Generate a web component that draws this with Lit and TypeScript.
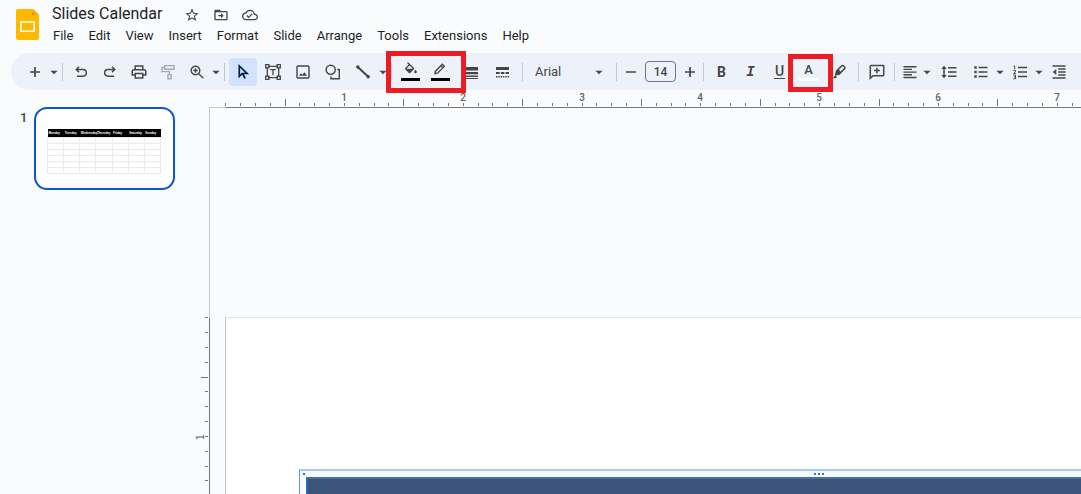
import { LitElement, html, svg, css } from "lit";
import { customElement, property, state } from "lit/decorators.js";

const INCH = 118.8;

const line = (d: string, w = 1.5) =>
  svg`<path d=${d} fill="none" stroke="currentColor" stroke-width=${w}></path>`;
const solid = (d: string) => svg`<path d=${d} fill="currentColor"></path>`;

/* 18-unit glyphs; those on a 24-unit grid sit in a scaled group */
const ICONS: Record<string, unknown> = {
  plus: line("M9 4v10M4 9h10", 1.7),
  minus: line("M4 9h10", 1.5),
  caret: solid("M5 7.5h8L9 11.5z"),
  undo: line("M7 3.8L4.3 6.5L7 9.2M4.5 6.5H11a3.2 3.2 0 0 1 0 6.7H5", 1.5),
  redo: line("M11 3.8L13.7 6.5L11 9.2M13.5 6.5H7a3.2 3.2 0 0 0 0 6.7H13", 1.5),
  print: svg`<g transform="scale(.75)">${solid("M19 8h-1V3H6v5H5c-1.66 0-3 1.34-3 3v6h4v4h12v-4h4v-6c0-1.66-1.34-3-3-3zM8 5h8v3H8V5zm8 12v2H8v-4h8v2zm2-2v-2H6v2H4v-4c0-.55.45-1 1-1h14c.55 0 1 .45 1 1v4h-2z")}</g>`,
  paint: svg`<g opacity=".42">${line("M5.7 2.6h9.3v3.6H5.7zM5.7 4.4H3v4.2h7.5v3M8.9 11.6h3.2v4.2H8.9z", 1.4)}</g>`,
  zoom: line("M7.5 3.2a4.3 4.3 0 1 1 0 8.6a4.3 4.3 0 0 1 0-8.6zM10.7 10.7L15.3 15.3M7.5 5.3v4.4M5.3 7.5h4.4", 1.4),
  pointer: line("M5.3 3v10.4l2.9-2.9h4.8zM8.6 10.5l2.5 5", 1.7),
  textbox: line("M4 3.3h10M4 14.7h10M3.3 4v10M14.7 4v10M1.7 1.7h3.2v3.2H1.7zM13.1 1.7h3.2v3.2h-3.2zM1.7 13.1h3.2v3.2H1.7zM13.1 13.1h3.2v3.2h-3.2zM6.2 6.7h5.6M9 6.7v5.5", 1.3),
  image: svg`${line("M4 3h10a1 1 0 0 1 1 1v10a1 1 0 0 1-1 1H4a1 1 0 0 1-1-1V4a1 1 0 0 1 1-1z", 1.4)}${solid("M5 12.8l2-2.6 1.4 1.6 2-2.6 2.7 3.6z")}`,
  shape: line("M6.7 2.2a4.6 4.6 0 1 1 0 9.2a4.6 4.6 0 0 1 0-9.2zM13.3 6.5h2v9.3H7v-2.2", 1.4),
  line: svg`${line("M4 4.2L14 13.6", 2)}<circle cx="3.8" cy="4" r="1.7" fill="currentColor"></circle><circle cx="14.2" cy="13.8" r="1.7" fill="currentColor"></circle>`,
  fill: svg`<g transform="translate(1 0) scale(.75)">${solid("M16.56 8.94L7.62 0 6.21 1.41l2.38 2.38-5.15 5.15c-.59.59-.59 1.54 0 2.12l5.5 5.5c.29.29.68.44 1.06.44s.77-.15 1.06-.44l5.5-5.5c.59-.58.59-1.53 0-2.12zM5.21 10L10 5.21 14.79 10H5.21zM19 11.5s-2 2.17-2 3.5c0 1.1.9 2 2 2s2-.9 2-2c0-1.33-2-3.5-2-3.5z")}</g>`,
  pencil: line("M3.4 13.1l.5-2.8L11.6 2.6l2.3 2.3L6.2 12.6zM10 4.2l2.3 2.3", 1.5),
  weight: solid("M2 4h14v3.4H2zM2 9h14v2.2H2zM2 12.6h14v1.4H2zM2 15h14v1H2z"),
  dash: solid("M2 4h13v3H2zM2 9h3.6v2H2zM6.8 9h3.6v2H6.8zM11.6 9H15v2h-3.4zM2 13h1.5v1.5H2zM4.3 13h1.5v1.5H4.3zM6.6 13h1.5v1.5H6.6zM8.9 13h1.5v1.5H8.9zM11.2 13h1.5v1.5h-1.5zM13.5 13H15v1.5h-1.5z"),
  marker: svg`${line("M6.5 8.1L11.5 3a1.5 1.5 0 0 1 2.2 0l.7.7a1.5 1.5 0 0 1 0 2.2L9.3 11z", 1.5)}${solid("M8.5 6.2l3 3L8.8 12 5.4 12.5 5 12.1 5.6 8.7zM2.8 15.2l2.4-3 1.8 1.8-1.3 1.2z")}`,
  comment: line("M3 2.5h12a.7.7 0 0 1 .7.7v8.9a.7.7 0 0 1-.7.7H5l-2.7 2.5V3.2a.7.7 0 0 1 .7-.7zM9 4.7v5.8M6.1 7.6h5.8", 1.5),
  align: line("M2.5 3.7h13M2.5 6.4h8.5M2.5 9.1h13M2.5 11.8h8.5M2.5 14.5h13", 1.4),
  spacing: svg`${line("M4 5v8M8 4.7h8.5M8 9h8.5M8 13.3h8.5", 1.5)}${solid("M4 2.8l2.7 3.2H1.3zM4 15.2l2.7-3.2H1.3z")}`,
  bullets: svg`${line("M6.5 4.5h9M6.5 9h9M6.5 13.5h9", 1.5)}${solid("M2.3 3.3h2.4v2.4H2.3zM2.3 7.8h2.4v2.4H2.3zM2.3 12.3h2.4v2.4H2.3z")}`,
  numbers: svg`${line("M7 4.5h9M7 9h9M7 13.5h9", 1.5)}${line("M2.5 3h1.2v3.3M2.3 7.6h2.2v1.2L2.5 10.5h2.3M2.3 12.1h2.2v3.6H2.3M3 13.9h1.5", 1)}`,
  outdent: svg`${line("M2.5 3h13M8.2 6h7.3M8.2 9h7.3M8.2 12h7.3M2.5 15h13", 1.4)}${solid("M6.3 6v6L2.7 9z")}`,
  star: svg`<g transform="scale(.75)">${solid("M22 9.24l-7.19-.62L12 2 9.19 8.63 2 9.24l5.46 4.73L5.82 21 12 17.27 18.18 21l-1.63-7.03L22 9.24zM12 15.4l-3.76 2.27 1-4.28-3.32-2.88 4.38-.38L12 6.1l1.71 4.04 4.38.38-3.32 2.88 1 4.28L12 15.4z")}</g>`,
  move: svg`<g transform="scale(.75)">${solid("M20 6h-8l-2-2H4c-1.1 0-2 .9-2 2v12c0 1.1.9 2 2 2h16c1.1 0 2-.9 2-2V8c0-1.1-.9-2-2-2zm0 12H4V8h16v10zm-8-1l4-4-4-4v3H8v2h4z")}</g>`,
  cloud: svg`<g transform="scale(.75)">${solid("M19.35 10.04C18.67 6.59 15.64 4 12 4 9.11 4 6.61 5.64 5.36 8.04 2.35 8.36 0 10.91 0 14c0 3.31 2.69 6 6 6h13c2.76 0 5-2.24 5-5 0-2.64-2.05-4.78-4.65-4.96zM19 18H6c-2.21 0-4-1.79-4-4 0-2.05 1.53-3.76 3.56-3.97l1.07-.11.5-.95C8.08 7.14 9.94 6 12 6c2.62 0 4.88 1.86 5.39 4.43l.3 1.5 1.53.11c1.56.1 2.78 1.41 2.78 2.96 0 1.65-1.35 3-3 3zm-9-3.82l-2.09-2.09L6.5 13.5 10 17l6.01-6.01-1.41-1.41z")}</g>`,
};

const icon = (name: string) =>
  html`<svg class="icon" viewBox="0 0 18 18" aria-hidden="true">${ICONS[name]}</svg>`;

@customElement("page-ruler")
class PageRuler extends LitElement {
  @property({ type: Boolean }) vertical = false;
  @state() private extent = 0;

  private observer = new ResizeObserver(([entry]) => {
    const { width, height } = entry.contentRect;
    this.extent = this.vertical ? height : width;
  });

  static styles = css`
    :host { display: block; overflow: hidden; }
    svg { display: block; width: 100%; height: 100%; }
    text { font: 500 10px Roboto, sans-serif; fill: #5f6368; text-anchor: middle; }
    .turned { font-family: "DejaVu Sans", sans-serif; }
  `;

  connectedCallback() {
    super.connectedCallback();
    this.observer.observe(this);
  }

  disconnectedCallback() {
    this.observer.disconnect();
    super.disconnectedCallback();
  }

  render() {
    const start = this.vertical ? 209.6 : 16.6;
    const ticks = [];
    for (let i = 0; start + (i * INCH) / 8 < this.extent - 4; i++) {
      const p = Math.floor(start + (i * INCH) / 8);
      const long = i % 8 === 4;
      const num = i % 8 === 0 ? i / 8 : 0;
      if (this.vertical) {
        ticks.push(svg`<rect x=${long ? 11 : 15} y=${p} width=${long ? 7 : 3} height="1" fill="#747775"></rect>`);
        if (num) ticks.push(svg`<text class="turned" transform=${`translate(14 ${p + 1}) rotate(-90)`}>${num}</text>`);
      } else {
        ticks.push(svg`<rect x=${p} y=${long ? 9 : 13} width="1" height=${long ? 7 : 3} fill="#747775"></rect>`);
        if (num) ticks.push(svg`<text x=${p} y="11">${num}</text>`);
      }
    }
    return this.vertical
      ? html`<svg aria-hidden="true"><rect x="19" width="1" height="210" fill="#c4c7c5"></rect><rect x="19" y="210" width="1" height="100%" fill="#747775"></rect>${ticks}</svg>`
      : html`<svg aria-hidden="true"><rect y="17" width="17" height="1" fill="#c4c7c5"></rect><rect x="17" y="17" width="100%" height="1" fill="#747775"></rect>${ticks}</svg>`;
  }
}

type Tool = [name: string, label: string, size?: string];

@customElement("app-root")
class AppRoot extends LitElement {
  static styles = css`
    :host {
      display: flex;
      flex-direction: column;
      height: 100vh;
      overflow: hidden;
      background: #f9fbfd;
      color: #1f1f1f;
      font-family: Roboto, sans-serif;
      font-size: 13px;
    }
    * { box-sizing: border-box; }
    button, input, select {
      font: inherit;
      color: inherit;
      background: none;
      border: 0;
      padding: 0;
      margin: 0;
    }
    .icon { width: 18px; height: 18px; display: block; flex: none; }
    header { display: flex; flex: none; gap: 12px; padding: 4px 16px 8px; }
    .logo { width: 24px; height: 32px; margin-top: 5px; flex: none; }
    .titles { display: flex; align-items: center; height: 20px; }
    h1 { margin: 0; font-size: 16px; line-height: 20px; font-weight: 400; }
    .title-actions { display: flex; gap: 13px; padding: 2px 0 0 21px; color: #444746; }
    .title-actions .icon { width: 16px; height: 16px; }
    nav { display: flex; gap: 15px; padding: 3px 0 0 1px; }
    nav button { line-height: 18px; }

    .toolbar {
      display: flex;
      flex: none;
      align-items: center;
      height: 37px;
      margin-left: 11px;
      padding-left: 9px;
      border-radius: 20px 0 0 20px;
      background: #edf2fa;
      color: #444746;
      white-space: nowrap;
    }
    .group { display: flex; align-items: center; flex: none; position: relative; }
    .tool { display: grid; place-items: center; height: 28px; width: 29px; flex: none; }
    .s { width: 24px; }
    .m { width: 30px; }
    .l { width: 32px; }
    .xl { width: 34px; }
    .caret { width: 10px; overflow: hidden; justify-content: center; }
    .caret .icon { width: 16px; height: 16px; }
    .active { width: 28px; margin: 0 1px; border-radius: 4px; background: #d3e3fd; color: #041e49; }
    .sep { width: 1px; height: 18px; margin: 0 3px; background: #c7c7c7; flex: none; }
    .swatch { align-content: center; }
    .swatch .icon { height: 16px; width: 16px; }
    .swatch::after { content: ""; width: 19px; height: 3px; background: #000; }
    .color { align-content: center; line-height: 16px; font-size: 13px; font-weight: 500; }
    .color::after { content: ""; width: 19px; height: 3px; background: #fff; }
    .bold { font-size: 14px; font-weight: 700; }
    .italic { font: italic 700 14px "Liberation Mono", monospace; }
    .underline { font-size: 14px; font-weight: 500; align-content: center; line-height: 13px; }
    .underline::after { content: ""; width: 11px; height: 1px; background: currentColor; }
    .font { display: flex; flex: none; align-items: center; width: 87px; padding: 0 6px 0 9px; }
    .font select { appearance: none; flex: 1; min-width: 0; font-size: 13px; line-height: 18px; outline: 0; }
    .font .icon { width: 16px; height: 16px; }
    .stepper { display: flex; flex: none; align-items: center; gap: 4px; padding-left: 1px; }
    .stepper button { display: grid; place-items: center; width: 20px; height: 28px; }
    .stepper input {
      width: 31px;
      height: 21px;
      border: 1px solid #747775;
      border-radius: 4px;
      text-align: center;
      font-size: 12px;
      font-weight: 500;
    }
    .mark { position: absolute; border: 5px solid #ed1c24; pointer-events: none; z-index: 1; }
    .mark-fill { left: -9px; top: -7px; width: 80px; height: 42px; }
    .mark-text { left: 81px; top: -4px; width: 45px; height: 38px; }

    main { flex: 1; display: grid; grid-template-columns: 190px 20px minmax(0, 1fr); grid-template-rows: 18px minmax(0, 1fr); min-height: 0; }
    .ruler-x { grid-column: 2 / 4; grid-row: 1; margin-left: 19px; }
    .ruler-y { grid-column: 2; grid-row: 2; min-height: 0; }
    .film { grid-column: 1; grid-row: 1 / 3; display: flex; align-items: flex-start; gap: 8px; padding: 17px 15px 0 20px; }
    .num { width: 6px; padding-top: 2px; line-height: 18px; color: #444746; font-weight: 500; }
    .thumb { flex: none; width: 141px; height: 83px; padding: 20px 12px 0 11px; border: 2px solid #0b57d0; border-radius: 13px; background: #fff; }
    .thumb table { width: 100%; border-collapse: collapse; table-layout: fixed; font: 700 3px "Liberation Sans", sans-serif; }
    .thumb th { height: 8px; padding: 2px 0 0 1px; background: #000; color: #fff; text-align: left; vertical-align: top; }
    .thumb td { height: 6px; padding: 0; border: 1px solid #eaeaea; }

    .canvas { grid-column: 3; grid-row: 2; display: flex; overflow: hidden; padding: 209px 0 0 15px; min-height: 0; }
    .slide { flex: none; width: 1188px; padding: 151px 0 0 73px; background: #fff; border-left: 1px solid #c4c7c5; border-top: 1px solid #e3e5e6; overflow: hidden; }
    .frame { width: 1040px; min-height: 300px; border: 1px solid #5c94dc; border-top: 2px solid #a5c9f3; background: #f7f9fc; }
    .handles { display: grid; grid-template-columns: 1fr auto 1fr; align-items: center; height: 6px; padding: 0 3px; }
    .dots { display: flex; gap: 2px; }
    .dots i { width: 2px; height: 2px; background: #3272d2; }
    .sheet { width: 1024px; margin-left: 6px; border-collapse: collapse; table-layout: fixed; border-left: 2px solid #2e66b0; }
    .sheet td { height: 60px; padding: 0; background: #3c547a; border-top: 2px solid #4470a8; }
  `;

  private tool([name, label, size = ""]: Tool) {
    return html`<button class="tool ${size}" aria-label=${label}>${icon(name)}</button>`;
  }
  private tools(...list: Tool[]) {
    return list.map((t) => this.tool(t));
  }
  private caret(label: string) {
    return this.tool(["caret", label, "caret"]);
  }

  render() {
    const sep = html`<span class="sep"></span>`;
    const days = ["Monday", "Tuesday", "Wednesday", "Thursday", "Friday", "Saturday", "Sunday"];
    return html`
      <header>
        <svg class="logo" viewBox="0 0 24 32" aria-hidden="true">
          <path d="M2 0h15l6 6v23a2 2 0 0 1-2 2H2a2 2 0 0 1-2-2V2a2 2 0 0 1 2-2z" fill="#ffba00"></path>
          <path d="M17 0l6 6h-4.5A1.5 1.5 0 0 1 17 4.5z" fill="#f9ab00"></path>
          <path d="M16 4h1.5v1.5H16z" fill="#e8501c"></path>
          <path d="M4.9 12.9h13.3v9.3H4.9z" fill="none" stroke="#fff" stroke-width="1.5"></path>
        </svg>
        <div>
          <div class="titles">
            <h1>Slides Calendar</h1>
            <div class="title-actions">
              <button aria-label="Star">${icon("star")}</button>
              <button aria-label="Move">${icon("move")}</button>
              <button aria-label="Document status">${icon("cloud")}</button>
            </div>
          </div>
          <nav>
            ${["File", "Edit", "View", "Insert", "Format", "Slide", "Arrange", "Tools", "Extensions", "Help"].map(
              (m) => html`<button>${m}</button>`
            )}
          </nav>
        </div>
      </header>

      <div class="toolbar" role="toolbar">
        <div class="group">${this.tool(["plus", "New slide"])}${this.caret("New slide with layout")}</div>
        ${sep}
        <div class="group">
          ${this.tools(["undo", "Undo"], ["redo", "Redo"], ["print", "Print"], ["paint", "Paint format"], ["zoom", "Zoom"])}
          ${this.caret("Zoom level")}
        </div>
        ${sep}
        <div class="group">
          ${this.tools(["pointer", "Select", "active"], ["textbox", "Text box", "m"], ["image", "Insert image", "m"], ["shape", "Shape", "m"], ["line", "Line", "m"])}
          ${this.caret("Line type")}
        </div>
        ${sep}
        <div class="group">
          ${this.tools(["fill", "Fill color", "m swatch"], ["pencil", "Border color", "m swatch"], ["weight", "Border weight", "l"], ["dash", "Border dash", "l"])}
          <span class="mark mark-fill"></span>
        </div>
        ${sep}
        <div class="font">
          <select aria-label="Font"><option>Arial</option></select>
          ${icon("caret")}
        </div>
        ${sep}
        <div class="stepper">
          <button aria-label="Decrease font size">${icon("minus")}</button>
          <input aria-label="Font size" value="14" />
          <button aria-label="Increase font size">${icon("plus")}</button>
        </div>
        ${sep}
        <div class="group">
          <button class="tool bold" aria-label="Bold">B</button>
          <button class="tool italic" aria-label="Italic">I</button>
          <button class="tool underline" aria-label="Underline">U</button>
          <button class="tool color" aria-label="Text color">A</button>
          ${this.tool(["marker", "Highlight color", "l"])}
          <span class="mark mark-text"></span>
        </div>
        ${sep}
        ${this.tool(["comment", "Add comment"])}
        ${sep}
        <div class="group">
          ${this.tool(["align", "Align", "s"])}${this.caret("Align options")}
          ${this.tool(["spacing", "Line spacing", "xl"])}
          ${this.tool(["bullets", "Bulleted list"])}${this.caret("Bulleted list options")}
          ${this.tool(["numbers", "Numbered list"])}${this.caret("Numbered list options")}
          ${this.tool(["outdent", "Decrease indent"])}
        </div>
      </div>

      <main>
        <div class="film">
          <span class="num">1</span>
          <div class="thumb">
            <table>
              <tr>${days.map((d) => html`<th>${d}</th>`)}</tr>
              ${[0, 1, 2, 3, 4, 5].map(() => html`<tr>${days.map(() => html`<td></td>`)}</tr>`)}
            </table>
          </div>
        </div>
        <page-ruler class="ruler-x"></page-ruler>
        <page-ruler class="ruler-y" vertical></page-ruler>
        <div class="canvas">
          <div class="slide">
            <div class="frame">
              <div class="handles">
                <span class="dots"><i></i></span>
                <span class="dots"><i></i><i></i><i></i></span>
              </div>
              <table class="sheet"><tr>${days.map(() => html`<td></td>`)}</tr></table>
            </div>
          </div>
        </div>
      </main>
    `;
  }
}
